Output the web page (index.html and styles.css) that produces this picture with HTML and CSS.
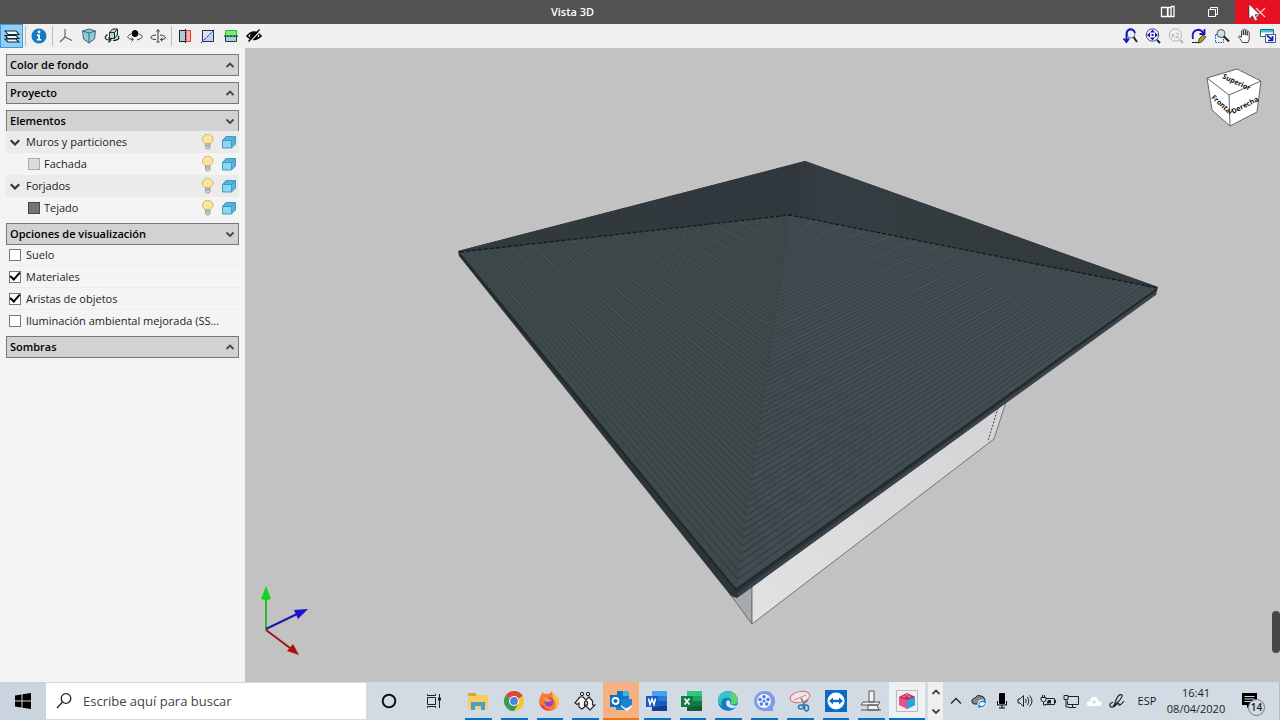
FILE: index.html
```html
<!DOCTYPE html>
<html lang="es">
<head>
<meta charset="utf-8">
<title>Vista 3D</title>
<link rel="stylesheet" href="styles.css">
</head>
<body>
<svg class="defs" aria-hidden="true">
  <symbol id="up" viewBox="0 0 10 10"><path d="M1.500 7 5 3.500 8.500 7" fill="none" stroke="currentColor" stroke-width="1.800"/></symbol>
  <symbol id="down" viewBox="0 0 10 10"><path d="M1.500 3.500 5 7 8.500 3.500" fill="none" stroke="currentColor" stroke-width="1.800"/></symbol>
  <symbol id="bulb" viewBox="0 0 16 16"><path d="M5.500 10C3.500 8 2.500 7 2.500 5.200a5 4.700 0 0 1 10.500 0C13 7 11.500 8 10 10z" fill="#fbe6a0" stroke="#d5b061"/><path d="M5.500 10h4.500v3.500l-1 1.500H6.500l-1-1.500z" fill="#d6d6d6" stroke="#929292" stroke-width=".8"/><path d="M5.500 12h4.500" stroke="#929292"/></symbol>
  <symbol id="box" viewBox="0 0 16 16"><path d="M1.500 6 5 2h9.500v8L10.500 14h-9z" fill="#58b3d8"/><path d="M1.500 6.500h9V14h-9z" fill="#8fd5ef" stroke="#3c9cc5"/><path d="m1.500 6.500 3.700-4h9.300l-4 4m4-4V10l-4 4" fill="none" stroke="#3c9cc5"/></symbol>
</svg>

<header class="titlebar">
  <h1>Vista 3D</h1>
  <button class="win" aria-label="Disposición"><svg width="16" height="16" viewBox="0 0 16 16" fill="none" stroke="#fff" stroke-width="1.300"><path d="M1.500 3.500h6v9h-6zM8 3.500h3v9H8zM11 2.500h3v10h-3"/></svg></button>
  <button class="win" aria-label="Restaurar"><svg width="14" height="14" viewBox="0 0 14 14" fill="none" stroke="#fff"><path d="M2.500 4.500h7v7h-7zM4.500 4V2.500h7v7H10"/></svg></button>
  <button class="win close" aria-label="Cerrar"><svg width="28" height="20" viewBox="0 0 28 20"><path d="m12 6 9 9m0-9-9 9" stroke="#ffc9cc" stroke-width="1.200"/><path d="M5 2v15l3.500-3.200 2.500 5.200 2.500-1.200-2.500-5.100h5z" fill="#fff" stroke="#333" stroke-width=".6"/></svg></button>
</header>

<nav class="toolbar" aria-label="Herramientas">
  <button class="tool on" aria-label="Capas"><svg viewBox="0 0 16 16" fill="#eafaff" stroke="#17252e" stroke-width="1.100"><path d="m1 11 3 3h11l-3-3zM1 7.500l3 3h11l-3-3zM1 3l3 3.500h11L12 3z"/></svg></button>
  <i class="sep"></i>
  <button class="tool" aria-label="Información"><svg viewBox="0 0 16 16"><circle cx="8" cy="8" r="7.500" fill="#147bc0"/><circle cx="8" cy="4" r="1.400" fill="#fff"/><path d="M5.800 6.500H9V11h1.300v1.500H5.700V11H7V8H5.800z" fill="#fff"/></svg></button>
  <i class="sep"></i>
  <button class="tool" aria-label="Ejes"><svg viewBox="0 0 16 16" fill="none" stroke-width="1.200"><path d="M7 1v8" stroke="#3f7f5c"/><path d="m7 9-5 5" stroke="#8f5050"/><path d="m7 9 7 3.500" stroke="#47698f"/></svg></button>
  <button class="tool" aria-label="Cubo"><svg viewBox="0 0 16 16" stroke="#375766" stroke-width=".9"><path d="M1.500 3 8 1l6.500 2-1 8L8 15l-5.500-4z" fill="#8fc9df"/><path d="m1.500 3 6.500 2 6.500-2M8 5v10" fill="none"/></svg></button>
  <button class="tool" aria-label="Girar cubo"><svg viewBox="0 0 16 16" stroke="#222"><path d="M5.500 4.500h5v6h-5zM5.500 4.500l3-3.500h5l-3 3.500m3-3.500v6l-3 3.500" fill="#a9d8e8"/><path d="M3.500 6.500C-1 10 2 12 6 12M4.500 9.500 7 12l-2.500 2.500M14 8c3 3-2 4.500-5 4.500" fill="none" stroke-width="1.200"/></svg></button>
  <button class="tool" aria-label="Orbitar"><svg viewBox="0 0 16 16" stroke="#444" fill="none"><path d="M4 6C-1 8 0 11 6 11.500m-1.500-2 2 2-2 2M12 6c5 2 4 4-2 6"/><circle cx="8" cy="5.500" r="3" fill="#000" stroke="#000"/></svg></button>
  <button class="tool" aria-label="Girar eje"><svg viewBox="0 0 16 16" stroke="#333" fill="none"><path d="M8 2v12M6.500 3.500 8 1.500l1.500 2M6 7C-1 7.500-1 11.500 6 11.500M10 7c7 .5 7 4.500 1 4.500M12.500 9.500l-2 2 2 2M6.500 14h3"/></svg></button>
  <i class="sep"></i>
  <button class="tool" aria-label="Sección vertical"><svg viewBox="0 0 16 16"><path d="M2.500 2.500h6v11h-6z" fill="#a4cede" stroke="#222"/><path d="M9 2.500h4.500v11H9z" fill="#ffaaa5" stroke="#e43834"/><path d="M8.500 1v14" stroke="#111" stroke-dasharray="2 1"/></svg></button>
  <button class="tool" aria-label="Sección diagonal"><svg viewBox="0 0 16 16"><path d="M2.500 2.500h11v11h-11z" fill="#bfd5eb" stroke="#26314c"/><path d="M3 3h10L3 13z" fill="#e2dcff"/><path d="M1 15 15 1" stroke="#2929b3" stroke-dasharray="3 1"/></svg></button>
  <button class="tool" aria-label="Sección horizontal"><svg viewBox="0 0 16 16"><path d="M2.500 8h11v5.500h-11z" fill="#a7d0e0" stroke="#263d45"/><path d="M2.500 2.500h11V8h-11z" fill="#7eea81" stroke="#29b92e"/><path d="M1 8h14" stroke="#111" stroke-dasharray="2 1"/></svg></button>
  <button class="tool" aria-label="Ocultar"><svg viewBox="0 0 16 16" fill="none" stroke="#000"><path d="M1 8q7-8 14 0-7 7-14 0z" stroke-width="1.600"/><circle cx="8" cy="8" r="3.500" fill="#000"/><path d="m4 14 10-11" stroke="#eee" stroke-width="1.200"/><path d="m2.500 13.500 11-12" stroke-width="1.300"/></svg></button>
  <span class="grow"></span>
  <button class="tool" aria-label="Zoom anterior"><svg viewBox="0 0 16 16" fill="none"><circle cx="9" cy="6" r="4" fill="#e6eef8" stroke="#777"/><path d="m11.500 9 3.500 5" stroke="#222" stroke-width="2"/><path d="M13 5C11-.500 5 0 4.500 6v7M1.500 10.500 4.500 14 7 10.500" stroke="#1717bd" stroke-width="1.900"/></svg></button>
  <button class="tool" aria-label="Ver todo"><svg viewBox="0 0 16 16" fill="none"><circle cx="7.500" cy="7" r="6.200" fill="#f3f6ff" stroke="#444a74"/><path d="m12 12 3 3" stroke="#222" stroke-width="2"/><path d="M7.500 1.500 5 4.500h5zm0 11L5 9.500h5zM2 7l3-2.500v5zm11 0-3-2.500v5zM6.500 6h2v2h-2z" fill="#1717bd"/></svg></button>
  <button class="tool" aria-label="Zoom x2"><svg viewBox="0 0 16 16" fill="none" stroke="#b5b5b5"><circle cx="7.500" cy="7" r="6.200"/><path d="m12 12 3 3" stroke-width="2"/><path d="m3.500 6 3 3.500m0-3.500-3 3.500M8 5.500q3-1.500 2.500 1L8 9.500h3"/></svg></button>
  <button class="tool" aria-label="Redibujar"><svg viewBox="0 0 16 16" fill="none"><path d="M2 11C0 2 8-1 12.500 5M13.500 1v5h-5" stroke="#1717bd" stroke-width="1.800"/><path d="M1 14.500h7" stroke="#222"/><path d="m8 11 4-4 3 2-4.500 5L7.500 15z" fill="#a59a38" stroke="#514a1a"/></svg></button>
  <button class="tool" aria-label="Zoom ventana"><svg viewBox="0 0 16 16" fill="none"><path d="M1.500 6.500h8v8h-8z" stroke="#2d49dc" stroke-dasharray="1.500 1"/><circle cx="7" cy="5.500" r="4" fill="#cce0e7" stroke="#4a5960"/><path d="m10 8.500 5 5" stroke="#222" stroke-width="2"/></svg></button>
  <button class="tool" aria-label="Mover"><svg viewBox="0 0 16 16" fill="#fff" stroke="#333" stroke-width=".9"><path d="M5.500 14.500C4 12 2.500 10 1.500 8.500q1-1.500 3 .8V3q1-1.500 1.800 0v4-5.200q1-1.400 2 0V7 2.500q1-1.300 1.900 0V7.500 4q1.200-1.300 2 0v7l-1.200 3.500z"/></svg></button>
  <button class="tool" aria-label="Ventanas"><svg viewBox="0 0 16 16"><path d="M.500 1.500h13v7H.500z" fill="#fff" stroke="#355d80"/><path d="M1 2h12v2.500H1z" fill="#32c9d2"/><path d="M5.500 6.500h10v8h-10z" fill="#fff" stroke="#355d80"/><path d="m7 7.500 5 4m.500-3.500v4.500H8" stroke="#1717bd" stroke-width="1.700" fill="none"/></svg></button>
</nav>

<main class="work">
  <aside class="side">
    <section><button class="head">Color de fondo<svg class="chev"><use href="#up"/></svg></button></section>
    <section><button class="head">Proyecto<svg class="chev"><use href="#up"/></svg></button></section>
    <section>
      <button class="head">Elementos<svg class="chev"><use href="#down"/></svg></button>
      <ul class="rows tree">
        <li class="row group"><svg class="twist"><use href="#down"/></svg><span class="name">Muros y particiones</span><svg class="ic"><use href="#bulb"/></svg><svg class="ic"><use href="#box"/></svg></li>
        <li class="row leaf"><i class="swatch light"></i><span class="name">Fachada</span><svg class="ic"><use href="#bulb"/></svg><svg class="ic"><use href="#box"/></svg></li>
        <li class="row group"><svg class="twist"><use href="#down"/></svg><span class="name">Forjados</span><svg class="ic"><use href="#bulb"/></svg><svg class="ic"><use href="#box"/></svg></li>
        <li class="row leaf"><i class="swatch dark"></i><span class="name">Tejado</span><svg class="ic"><use href="#bulb"/></svg><svg class="ic"><use href="#box"/></svg></li>
      </ul>
    </section>
    <section>
      <button class="head">Opciones de visualización<svg class="chev"><use href="#down"/></svg></button>
      <div class="rows options">
        <label class="row"><input type="checkbox">Suelo</label>
        <label class="row"><input type="checkbox" checked>Materiales</label>
        <label class="row"><input type="checkbox" checked>Aristas de objetos</label>
        <label class="row"><input type="checkbox">Iluminación ambiental mejorada (SS...</label>
      </div>
    </section>
    <section><button class="head">Sombras<svg class="chev"><use href="#up"/></svg></button></section>
  </aside>

  <div class="view">
    <svg class="scene" viewBox="245 48 1035 634" role="img" aria-label="Modelo de tejado">
      <defs>
        <clipPath id="faceL"><path d="M790 215 460 252 736 588z"/></clipPath>
        <clipPath id="faceR"><path d="M790 215 736 588 1157 288z"/></clipPath>
        <linearGradient id="gBack" x1="0" x2="1" y1="0" y2="0"><stop offset="0" stop-color="#323a3e"/><stop offset=".48" stop-color="#31383d"/><stop offset=".52" stop-color="#343d41"/><stop offset="1" stop-color="#32393d"/></linearGradient>
        <linearGradient id="gWall" x1="0" x2="1" y1="1" y2="0"><stop offset="0" stop-color="#e2e2e2"/><stop offset="1" stop-color="#d3d3d6"/></linearGradient>
        <linearGradient id="gTile" gradientUnits="userSpaceOnUse" x1="0" x2="0" y1="215" y2="588"><stop offset="0" stop-color="#283136" stop-opacity=".25"/><stop offset="1" stop-color="#283136" stop-opacity=".9"/></linearGradient>
      </defs>
      <path d="M730 594 752 624V580z" fill="#a9aaab" stroke="#68696b"/>
      <path d="M752 584 1006 402 994 439 752 624z" fill="url(#gWall)" stroke="#737476"/>
      <path d="m998 408-10 33" stroke="#444" stroke-dasharray="2 1.500" fill="none"/>
      <path d="M458 251 805 161l353 126-2 7-419 304-6-2-272-340z" fill="#2d3439"/>
      <path d="M458 251 805 161l353 126-368-72z" fill="url(#gBack)"/>
      <path d="M790 215 460 252l276 336z" fill="#3e494c"/>
      <path d="M790 215 736 588l421-300z" fill="#404c4f"/>
      <g clip-path="url(#faceL)"><path id="tilesL" class="tiles"/><path id="streakL" class="streak"/></g>
      <g clip-path="url(#faceR)"><path id="tilesR" class="tiles"/><path id="streakR" class="streak"/></g>
      <path d="m460 252 330-37 367 73" fill="none" stroke="#151b1e" stroke-width="1.300" stroke-dasharray="4 2"/>
      <path d="m460 255 276 335 421-301" fill="none" stroke="#1f272b" stroke-width="1.500"/>
      <path d="M738 595 1156 293" fill="none" stroke="#3b444b" stroke-width="3"/>
    </svg>
    <svg class="cube" width="58" height="60" viewBox="1205 67 58 60" role="img" aria-label="Cubo de vistas">
      <path d="m1207 78 30-9 24 12-4 31-27 14-18-16z" fill="#fff" stroke="#666"/>
      <path d="m1207 78 22 17 32-14m-32 14 1 31" fill="none" stroke="#666"/>
      <text transform="translate(1222 78) rotate(25)">Superior</text>
      <text transform="translate(1211 98) rotate(42)">Frontal</text>
      <text transform="translate(1233 114) rotate(-27)">Derecha</text>
    </svg>
    <svg class="axes" width="48" height="74" viewBox="261 585 48 74" role="img" aria-label="Ejes de coordenadas">
      <path d="M266 630v-31" stroke="#20bd2a" stroke-width="2"/><path d="m266 586 5 13q-5 2-10 0z" fill="#10d51b"/>
      <path d="m266 629 31-15" stroke="#1b18ad" stroke-width="2"/><path d="m308 609-14 1 4 9z" fill="#1b13cf"/>
      <path d="m266 630 24 18" stroke="#9e1515" stroke-width="2"/><path d="m299 655-6-11-6 7z" fill="#b50d0d"/>
    </svg>
    <i class="handle"></i>
  </div>
</main>

<footer class="taskbar">
  <button class="start" aria-label="Inicio"><svg width="16" height="16" viewBox="0 0 16 16"><path d="m0 2.500 6.500-1v6H0zM7.500 1.300 16 0v7.500H7.500zM0 8.500h6.500v6L0 13.500zM7.500 8.500H16V16l-8.500-1.300z"/></svg></button>
  <label class="search"><svg width="18" height="18" viewBox="0 0 18 18" fill="none" stroke="#222" stroke-width="1.300"><circle cx="11" cy="6.500" r="4.800"/><path d="M7.500 10 2 16"/></svg><input type="text" placeholder="Escribe aquí para buscar" aria-label="Buscar"></label>
  <button class="wide" aria-label="Cortana"><svg width="16" height="16"><circle cx="8" cy="8" r="6.300" fill="none" stroke="#111" stroke-width="2"/></svg></button>
  <button class="wide" aria-label="Vista de tareas"><svg width="16" height="16" viewBox="0 0 16 16" fill="none" stroke="#222"><path d="M1.500 4.500h8v7h-8zM1.500 1v1.500h8V1M1.500 15v-1.500h8V15M13.500 1v14" /><path d="M12 4.500h3v3h-3z" fill="#222" stroke="none"/></svg></button>
  <div class="apps">
    <button class="app" aria-label="Explorador"><svg viewBox="0 0 22 22"><path d="M1 3h8l2 2h10v14H1z" fill="#f6cf63"/><path d="M1 3h8v3H1z" fill="#d9a43a"/><path d="M4 12h14v8h-4v-4H8v4H4z" fill="#4a9dcc"/></svg></button>
    <button class="app" aria-label="Chrome"><svg viewBox="0 0 22 22"><circle cx="11" cy="11" r="10" fill="#f5c431"/><path d="M11 11 2.300 6a10 10 0 0 1 17.400 0z" fill="#d94a3a"/><path d="M11 11 2.300 6A10 10 0 0 0 11 21l4-7z" fill="#3a9b57"/><circle cx="11" cy="11" r="5" fill="#fff"/><circle cx="11" cy="11" r="3.900" fill="#4a86dc"/></svg></button>
    <button class="app" aria-label="Firefox"><svg viewBox="0 0 22 22"><path d="M3 5q1-2 2-3l1 2q3-1 5 0l3-3q1 3 4 5 3 3 3 6a10 9 0 0 1-20 0Q1 8 3 5z" fill="#fa7a31"/><path d="M14 1q1 3 4 5 3 3 3 6-1 5-5 7 3-4 1-8-3-4-3-10z" fill="#ffc337"/><path d="M2 14q3 8 12 6-6 0-8-4z" fill="#ee2f67"/><circle cx="11" cy="12" r="4.500" fill="#8b45ca"/><path d="M6 8q3-1 5 1l3 1q-2 2-5 2-2 0-3-4z" fill="#ff9d2f"/></svg></button>
    <button class="app" aria-label="Flechas"><svg viewBox="0 0 22 22" stroke="#222"><circle cx="8" cy="4" r="1.700" fill="#ddd"/><circle cx="14" cy="4" r="1.700" fill="#ddd"/><path d="M6 7 1 13l2 1.500L5 13v4l3 2 2.500-2v-5l1.500-1 1.500 1v3H11l5 5 5-5h-2.500v-4L15 7l-3 3-3-3z" fill="#fff" stroke-width="1.200"/></svg></button>
    <button class="app alert" aria-label="Outlook"><svg viewBox="0 0 22 22"><path d="M7 1h12v10H7z" fill="#1478c6"/><path d="M13 1h6v5h-6z" fill="#39b2eb"/><path d="M6 9h16v6l-6 5H6z" fill="#1685d2"/><path d="m10 15 6 4 7-4-6 6z" fill="#fff3e5" stroke="#fff3e5"/><path d="M0 5h11v12H0z" fill="#0872c1"/><circle cx="5.500" cy="11" r="3" fill="none" stroke="#fff" stroke-width="1.800"/></svg></button>
    <button class="app" aria-label="Word"><svg viewBox="0 0 22 22"><path d="M6 1h15v5H6z" fill="#41a5ee"/><path d="M6 6h15v5H6z" fill="#2b7cd3"/><path d="M6 11h15v5H6z" fill="#185abd"/><path d="M6 16h15v5H6z" fill="#103f91"/><path d="M0 6h12v11H0z" fill="#185abd"/><path d="m2.500 8.500 1.500 6 2-5.500 2 5.500 1.500-6" fill="none" stroke="#fff" stroke-width="1.500"/></svg></button>
    <button class="app" aria-label="Excel"><svg viewBox="0 0 22 22"><path d="M6 1h15v5H6z" fill="#33c481"/><path d="M6 6h15v5H6z" fill="#21a366"/><path d="M6 11h15v5H6z" fill="#107c41"/><path d="M6 16h15v5H6z" fill="#185c37"/><path d="M0 6h12v11H0z" fill="#107c41"/><path d="m3.500 8.500 5 6m0-6-5 6" stroke="#fff" stroke-width="1.700"/></svg></button>
    <button class="app" aria-label="Edge"><svg viewBox="0 0 22 22"><circle cx="11" cy="11" r="10" fill="#147bc5"/><path d="M1 10C2-2 20-1 21 10c0 5-5 5-8 4 3-3 0-7-4-6-4 0-6 4-4 8q-4-2-4-6z" fill="#36c3c8"/><path d="M13 2q8 2 8 9-2 4-7 3 3-4-1-7 2-3 0-5z" fill="#61d36b"/><path d="M13 14q3 3 8 1-3 4-7 3-5-1-5-5 0-2 2-3 3 1 2 4z" fill="#dce9f1"/></svg></button>
    <button class="app" aria-label="Vídeo"><svg viewBox="0 0 22 22"><path d="M11 1a10 10 0 1 0 0 20h9v-4A10 10 0 0 0 11 1z" fill="#7f9cec"/><circle cx="11" cy="11" r="7" fill="#edf4ff"/><g fill="#5778d5"><circle cx="11" cy="11" r="1.500"/><circle cx="11" cy="6.700" r="1.700"/><circle cx="15" cy="9.500" r="1.700"/><circle cx="13.700" cy="14" r="1.700"/><circle cx="8.300" cy="14" r="1.700"/><circle cx="7" cy="9.500" r="1.700"/></g></svg></button>
    <button class="app" aria-label="Recortes"><svg viewBox="0 0 22 22" fill="none"><ellipse cx="11" cy="7" rx="10" ry="5.500" transform="rotate(-12 11 7)" fill="#f0e5e6" stroke="#d56d6d"/><path d="m5 10 12-5" stroke="#da8585"/><path d="m12 8 4 8m3-6-7 6" stroke="#777" stroke-width="1.500"/><ellipse cx="12" cy="17" rx="2.500" ry="2" stroke="#237eb0" stroke-width="1.600"/><ellipse cx="17.500" cy="18" rx="2" ry="3" stroke="#237eb0" stroke-width="1.600"/></svg></button>
    <button class="app" aria-label="TeamViewer"><svg viewBox="0 0 22 22"><path d="M0 0h22v22H0z" fill="#0b6cc8"/><circle cx="11" cy="11" r="8.500" fill="#fff"/><path d="m4 11 4-3.500v2.300h6V7.500l4 3.500-4 3.500v-2.300H8v2.300z" fill="#0b6cc8"/></svg></button>
    <button class="app" aria-label="Estructuras"><svg viewBox="0 0 22 22" fill="#f3f3f3" stroke="#555"><path d="M9 1h5v11H9zM3 12h17l-2 3H1zM8 15h9l2 5H8zM1 20h20"/></svg></button>
    <button class="app current" aria-label="Modelo"><svg viewBox="0 0 22 22"><path d="M.500.500h21v21H.500z" fill="#eee" stroke="#bbb"/><path d="m3 7 8-4 8 4v8l-8 4-8-4z" fill="#ed4d8c"/><path d="m11 10 8-3v8l-8 4z" fill="#21a8dc"/><path d="m3 7 8 3 8-3-8-4z" fill="#b52d59"/><g fill="#ef6f92"><ellipse cx="8" cy="6.500" rx="1.800" ry="1"/><ellipse cx="13" cy="6.500" rx="1.800" ry="1"/><ellipse cx="11" cy="4.700" rx="1.800" ry="1"/></g></svg></button>
  </div>
  <div class="scroller"><button aria-label="Subir"><svg class="chev"><use href="#up"/></svg></button><button aria-label="Bajar"><svg class="chev"><use href="#down"/></svg></button></div>
  <div class="tray">
    <button class="mini" aria-label="Mostrar iconos"><svg width="12" height="12"><path d="m1 8.500 5-5 5 5" fill="none" stroke="#222" stroke-width="1.300"/></svg></button>
    <button class="mini" aria-label="Nube"><svg width="16" height="16" viewBox="0 0 16 16"><path d="M3 11Q0 10 1 7q1-2 3-2 2-4 6-2 3 0 4 4v4z" fill="#888" stroke="#222"/><circle cx="11" cy="11" r="4.500" fill="#e4f1fb"/><path d="M8 10.500q3-4 6-1V7m0 4.500q-3 4-6 1V15" fill="none" stroke="#1774c0" stroke-width="1.200"/></svg></button>
    <button class="mini" aria-label="Micrófono"><svg width="16" height="16" viewBox="0 0 16 16"><rect x="5" y="0" width="6" height="11" rx="1"/><path d="M3.500 8v4h9V8M8 12v3M5 15h6" fill="none" stroke="#000"/></svg></button>
    <button class="mini" aria-label="Volumen"><svg width="16" height="16" viewBox="0 0 16 16" fill="none" stroke="#222"><path d="M1 6h2l3.500-3.500v11L3 10H1zM8.500 6q1.500 2 0 4M10.500 4q3 4 0 8M12.500 2.500q5 5.500 0 11"/></svg></button>
    <button class="mini" aria-label="Batería"><svg width="16" height="16" viewBox="0 0 16 16" fill="none" stroke="#222"><path d="M6 5.500h8.500v6H5M15.500 7v3M1 4.500h5v3q-2.500 3-5 0zM2.500 2v2M4.500 2v2M3.500 9v3H6"/><path d="M8 7h3v3.500H6.500z" fill="#222" stroke="none"/></svg></button>
    <button class="mini" aria-label="Red"><svg width="16" height="16" viewBox="0 0 16 16" fill="none" stroke="#222"><path d="M5 3.500h10.500v8H4.500V8M9.500 12v3M6 14.500h7M1 2.500h4v4H1zM3 7v7h3"/></svg></button>
    <button class="mini" aria-label="OneDrive"><svg width="16" height="16" viewBox="0 0 16 16"><path d="M3 13Q0 12 1 9.500 1.500 8 4 8q1-5 5-4 3 0 3 4 4 0 3.500 3-.500 2-2.500 2z" fill="#fff"/><path d="M8 7v4M6 9h4" stroke="#c2d0dc"/></svg></button>
    <button class="mini" aria-label="Lápiz"><svg width="16" height="16" viewBox="0 0 16 16" fill="none" stroke="#222" stroke-width="1.200"><path d="M4 14q2-3 3-7 3-7 6-5 1 1-3 6l-5 5zM4 9q-5 2-2 5 3 1 6-3 3-1 2 1 1 1 5-4"/></svg></button>
    <button class="lang">ESP</button>
    <button class="clock"><time>16:41</time><span>08/04/2020</span></button>
    <button class="note" aria-label="14 notificaciones"><svg width="16" height="16" viewBox="0 0 16 16"><path d="M0 0h15v12H8l-3 3v-3H0z"/><path d="M2.500 3.500h10m-10 2.500h10m-10 2.500H9" stroke="#d2dae3"/></svg><b class="badge">14</b></button>
  </div>
</footer>
<script src="scene.js"></script>
</body>
</html>
```
FILE: styles.css
```css
* { box-sizing: border-box; }
body {
  margin: 0;
  min-height: 100vh;
  display: grid;
  grid-template-rows: auto auto 1fr auto;
  font: 11px/16px "Open Sans", "Noto Sans", sans-serif;
  color: #1c1c1c;
  background: #c2c2c2;
}
button { font: inherit; color: inherit; border: 0; padding: 0; background: none; }
svg { display: block; flex: none; }
.defs { position: absolute; width: 0; height: 0; }

.titlebar { display: flex; height: 24px; background: #525252; color: #fff; }
.titlebar h1 { flex: 1; margin: 0; font-size: 11px; line-height: 24px; font-weight: 600; text-align: center; }
.win { width: 45px; display: grid; place-items: center; }
.close { background: #e81123; }

.toolbar { display: flex; align-items: center; height: 24px; padding-right: 1px; background: #f0f0f0; }
.tool { width: 23px; height: 24px; display: grid; place-items: center; }
.tool svg { width: 16px; height: 16px; }
.tool.on { background: #91d0f5; border: 1px solid #3c9cdb; }
.sep { width: 1px; height: 20px; margin: 0 1px 0 2px; background: #bcbcbc; }
.grow { flex: 1; }

.work { display: flex; }
.side { width: 245px; flex: none; padding: 6px; background: #f4f4f4; display: flex; flex-direction: column; gap: 6px; }
.head {
  display: flex; align-items: center; justify-content: space-between;
  width: 100%; min-height: 22px; padding: 0 3px;
  background: #d2d2d2; border: 1px solid #777;
  font-weight: 600; color: #000;
}
.chev { width: 10px; height: 10px; color: #444; }
.rows { list-style: none; margin: -1px 0 -2px; padding: 0; }
.row { display: flex; align-items: center; min-height: 22px; padding-left: 3px; }
.group { background: #ebebeb; }
.twist { width: 12px; height: 12px; margin-right: 5px; color: #333; }
.leaf { padding-left: 22px; }
.swatch { width: 12px; height: 12px; margin-right: 4px; border: 1px solid #aaa; }
.light { background: #dcdcdc; }
.dark { background: #6c7780; border-color: #454c52; }
.name { flex: 1; }
.ic { width: 16px; height: 16px; margin-right: 5px; }
.ic:last-child { margin-right: 2px; }
.options .row { border-bottom: 1px solid #ececec; }
.options .row:last-child { border-bottom: 0; }
.options input {
  appearance: none; width: 12px; height: 12px; margin: 0 5px 0 0;
  border: 1px solid #777; background: #fff; display: grid; place-items: center;
}
.options input:checked::before {
  content: ""; width: 8px; height: 4px; margin-bottom: 3px;
  border: solid #000; border-width: 0 0 2px 2px; transform: rotate(-48deg);
}

.view { position: relative; flex: 1; min-width: 0; background: #c2c2c2; overflow: hidden; }
.scene { width: 100%; height: 100%; }
.tiles { fill: none; stroke: url(#gTile); stroke-width: 1; }
.streak { fill: none; stroke: #5b696b; stroke-width: 1; opacity: .35; }
.cube { position: absolute; top: 19px; right: 17px; }
.cube text { font: 700 7px "Open Sans", sans-serif; fill: #111; }
.axes { position: absolute; left: 16px; bottom: 23px; }
.handle { position: absolute; right: 0; bottom: 29px; width: 8px; height: 42px; border-radius: 4px; background: #454545; }

.taskbar { display: flex; height: 38px; background: #d2dae3; }
.start { width: 46px; display: grid; place-items: center; background: #cbd5e0; }
.search { width: 320px; display: flex; align-items: center; gap: 10px; padding: 0 9px; margin: 1px 0; background: #fff; }
.search input { flex: 1; min-width: 0; border: 0; padding: 0; outline: 0; font: 13px/20px "Open Sans", sans-serif; }
.search input::placeholder { color: #444; opacity: 1; }
.wide { width: 45px; display: grid; place-items: center; }
.apps { display: flex; flex: 0 1 465px; margin-left: 4px; }
.app { flex: 1; display: grid; place-items: center; position: relative; }
.app svg { width: 22px; height: 22px; }
.app::after { content: ""; position: absolute; left: 5px; right: 4px; bottom: 0; height: 2px; background: #0a73c8; }
.alert { background: #f5b183; }
.alert::after { left: 0; right: 0; background: #f17414; }
.current { background: #eef1f4; }
.current::after { left: 0; right: 0; }
.scroller { width: 15px; margin-left: 3px; display: grid; background: #f0f0f0; }
.scroller button { display: grid; place-items: center; }
.tray { display: flex; margin-left: auto; padding-right: 5px; border-right: 1px solid #b3bcc6; }
.mini { width: 23px; display: grid; place-items: center; }
.lang { width: 38px; }
.clock { width: 60px; display: grid; align-content: center; text-align: center; }
.note { width: 48px; display: grid; place-items: center; position: relative; }
.badge {
  position: absolute; right: 9px; bottom: 4px; width: 17px; height: 17px;
  border: 1px solid #777; border-radius: 50%; background: #d2dae3;
  font-size: 10px; line-height: 15px; font-weight: 600;
}
```
FILE: scene.js
```js
// Rows of tiles run parallel to each eave and converge on its vanishing point.
const apex = [790, 215];
const corner = [736, 588];
const vanish = { L: [210, -51], R: [1638, -55] };
const rows = 76;
const depth = 1.8;

for (const side of ["L", "R"]) {
  const v = vanish[side];
  let tiles = "";
  let streaks = "";
  for (let i = 1; i < rows; i++) {
    const u = i / rows;
    const t = u / ((1 - u) * depth + u);
    const x = apex[0] + (corner[0] - apex[0]) * t;
    const y = apex[1] + (corner[1] - apex[1]) * t;
    tiles += `M${x} ${y}L${v[0]} ${v[1]}`;
    const a = ((i * 37) % 61) / 100;
    const b = a + 0.07;
    const at = (k, o) => `${x + (v[0] - x) * k} ${y + o + (v[1] - y) * k}`;
    streaks += `M${at(a, 2)}L${at(b, 2)}`;
  }
  document.getElementById("tiles" + side).setAttribute("d", tiles);
  document.getElementById("streak" + side).setAttribute("d", streaks);
}
```
